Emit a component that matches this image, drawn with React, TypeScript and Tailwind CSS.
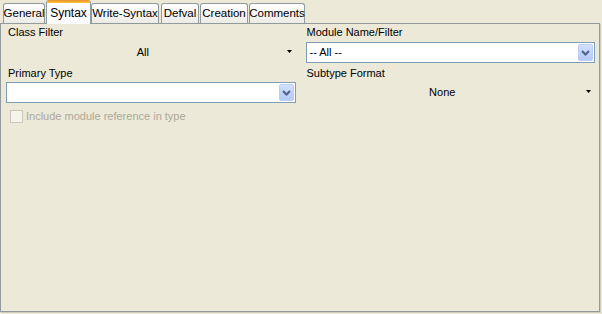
import React from "react";

const tabs = [
	{ label: "General", ml: "ml-[3px]", w: "w-[42px]" },
	{ label: "Syntax", ml: "ml-[1px]", w: "w-[45px]", active: true },
	{ label: "Write-Syntax", ml: "ml-0", w: "w-[68px]" },
	{ label: "Defval", ml: "ml-[2px]", w: "w-[38px]" },
	{ label: "Creation", ml: "ml-[1px]", w: "w-[48px]" },
	{ label: "Comments", ml: "ml-[1px]", w: "w-[56px]" },
];

function ComboButton() {
	return (
		<div className="absolute right-[1px] top-[1px] bottom-[1px] flex w-[15px] items-center justify-center rounded-[2px] border border-[#b9cdf7] bg-gradient-to-b from-[#d2e0fd] to-[#b3c8f6]">
			<svg width="9" height="6" viewBox="0 0 9 6">
				<path d="M1 1 L4.5 4.5 L8 1" fill="none" stroke="#4d6185" strokeWidth="2" />
			</svg>
		</div>
	);
}

function FlatCombo({ value }: { value: string }) {
	return (
		<div className="relative flex h-[21px] items-center justify-center pr-[16px]">
			<span>{value}</span>
			<svg className="absolute right-[4px] top-[8px]" width="5" height="3" viewBox="0 0 5 3">
				<path d="M0 0 H5 L2.5 3 Z" fill="#000" />
			</svg>
		</div>
	);
}

function EditCombo({ value }: { value: string }) {
	return (
		<div className="relative flex h-[21px] items-center border border-[#7f9db9] bg-white pl-[3px]">
			<span>{value}</span>
			<ComboButton />
		</div>
	);
}

export default function App() {
	return (
		<div
			className="flex h-[314px] w-[602px] flex-col bg-[#ece9d8] text-[11px] text-black"
			style={{ fontFamily: '"Liberation Sans", Arial, sans-serif' }}
		>
			<div className="relative z-10 flex h-[24px] items-end">
				{tabs.map((t) =>
					t.active ? (
						<div
							key={t.label}
							className={`${t.ml} ${t.w} flex h-[24px] flex-col overflow-hidden rounded-t-[3px] border-x border-[#919b9c] bg-[#fcfcfe]`}
						>
							<div className="h-[3px] bg-gradient-to-b from-[#e68b2c] to-[#ffc73c]" />
							<div className="flex flex-1 items-center justify-center whitespace-nowrap pb-[2px] text-[12px]">{t.label}</div>
						</div>
					) : (
						<div
							key={t.label}
							className={`${t.ml} ${t.w} mb-[1px] flex h-[20px] items-center justify-center whitespace-nowrap rounded-t-[3px] border-x border-t border-[#919b9c] bg-gradient-to-b from-white to-[#ecebe6] text-[11.5px]`}
						>
							{t.label}
						</div>
					),
				)}
			</div>
			<div className="-mt-[1px] mb-[2px] mr-[2px] flex-1 border border-[#919b9c] shadow-[1px_1px_0_#d0cebf]">
				<div className="grid grid-cols-2 gap-x-[10px] pl-[5px] pr-[4px]">
					<div className="flex flex-col">
						<div className="h-[17px] leading-[17px] pl-[2px]">Class Filter</div>
						<div className="mt-[1px]">
							<FlatCombo value="All" />
						</div>
						<div className="mt-[1px] h-[18px] leading-[18px] pl-[2px]">Primary Type</div>
						<div>
							<EditCombo value="" />
						</div>
						<div className="mt-[5px] flex items-center gap-[3px] pl-[4px] text-[#aca899]">
							<div className="h-[13px] w-[13px] border border-[#c9c7ba] bg-[#f5f4ea]" />
							<span>Include module reference in type</span>
						</div>
					</div>
					<div className="flex flex-col">
						<div className="h-[17px] leading-[17px] pl-[1px]">Module Name/Filter</div>
						<div className="mt-[1px]">
							<EditCombo value="-- All --" />
						</div>
						<div className="mt-[1px] h-[18px] leading-[18px] pl-[1px]">Subtype Format</div>
						<div>
							<FlatCombo value="None" />
						</div>
					</div>
				</div>
			</div>
		</div>
	);
}
